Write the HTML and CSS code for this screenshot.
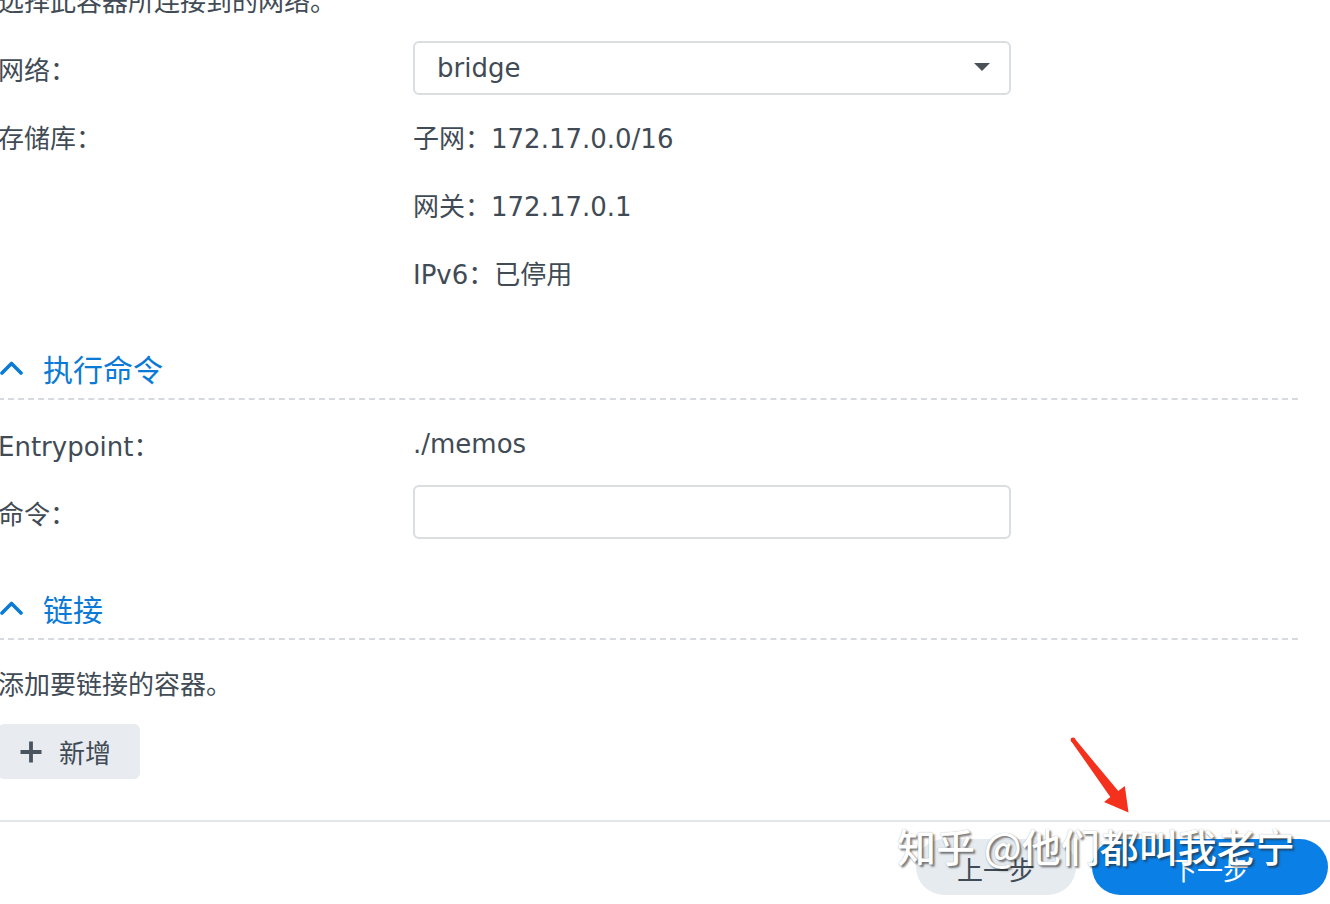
FILE: index.html
```html
<!DOCTYPE html>
<html lang="zh-CN">
<head>
<meta charset="utf-8">
<title>网络设置</title>
<link rel="stylesheet" href="styles.css">
</head>
<body>
<div class="page">
  <div class="content">
    <p class="desc top-desc">选择此容器所连接到的网络。</p>

    <div class="row">
      <div class="label">网络：</div>
      <div class="value">
        <div class="select"><span>bridge</span><span class="caret"></span></div>
      </div>
    </div>
    <div class="row">
      <div class="label">存储库：</div>
      <div class="value">子网：172.17.0.0/16</div>
    </div>
    <div class="row">
      <div class="label"></div>
      <div class="value">网关：172.17.0.1</div>
    </div>
    <div class="row">
      <div class="label"></div>
      <div class="value">IPv6：已停用</div>
    </div>

    <div class="section-head">
      <svg class="chevron" viewBox="0 0 24 16" width="24" height="16"><polyline points="2,14 11.5,4.5 21,14" fill="none" stroke="#0b7ad6" stroke-width="3.6" stroke-linecap="round" stroke-linejoin="round"/></svg>
      <span>执行命令</span>
    </div>

    <div class="row">
      <div class="label">Entrypoint：</div>
      <div class="value">./memos</div>
    </div>
    <div class="row">
      <div class="label">命令：</div>
      <div class="value"><div class="input"></div></div>
    </div>

    <div class="section-head">
      <svg class="chevron" viewBox="0 0 24 16" width="24" height="16"><polyline points="2,14 11.5,4.5 21,14" fill="none" stroke="#0b7ad6" stroke-width="3.6" stroke-linecap="round" stroke-linejoin="round"/></svg>
      <span>链接</span>
    </div>

    <p class="desc link-desc">添加要链接的容器。</p>
    <button class="add-btn">
      <svg class="plus" viewBox="0 0 24 24" width="24" height="24"><path d="M12 1.5V22.5M1.5 12H22.5" stroke="#4a5360" stroke-width="3.8" stroke-linecap="butt"/></svg>
      <span>新增</span>
    </button>
  </div>

  <div class="footer">
    <button class="btn btn-prev">上一步</button>
    <button class="btn btn-next">下一步</button>
  </div>
</div>

<svg class="arrow" viewBox="1060 730 80 90" width="80" height="90">
  <circle cx="1073" cy="740" r="2.4" fill="#f4311d"/>
  <polygon points="1071.4,741.4 1074.6,738.6 1118.3,791 1124.8,786 1128.5,812.5 1104,802 1110.3,797" fill="#f4311d"/>
</svg>

<div class="watermark">知乎 @他们都叫我老宁</div>
</body>
</html>
```

FILE: styles.css
```css
* {
  box-sizing: border-box;
}

html, body {
  margin: 0;
  padding: 0;
  background: #ffffff;
}

body {
  width: 1330px;
  height: 904px;
  overflow: hidden;
  position: relative;
  font-family: "DejaVu Sans", "Noto Sans CJK SC", sans-serif;
  font-size: 26px;
  color: #414b55;
}

.page {
  display: flex;
  flex-direction: column;
}

.content {
  width: 1300px;
  margin-left: -2px;
  display: flex;
  flex-direction: column;
}

.desc {
  margin: 0;
  height: 54px;
  line-height: 54px;
  white-space: nowrap;
}

.top-desc {
  margin-top: -25px;
  margin-bottom: 12px;
}

.link-desc {
  margin-top: 1px;
  margin-bottom: 12px;
}

.row {
  display: grid;
  grid-template-columns: 415px 598px;
  height: 54px;
  align-items: center;
  margin-bottom: 14px;
}

.label, .value {
  white-space: nowrap;
}

.select {
  height: 54px;
  border: 2px solid #d9dee3;
  border-radius: 6px;
  display: flex;
  align-items: center;
  justify-content: space-between;
  padding: 0 19px 0 22px;
  background: #fff;
}

.caret {
  width: 0;
  height: 0;
  border-left: 8px solid transparent;
  border-right: 8px solid transparent;
  border-top: 8px solid #4a5159;
  margin-top: -2px;
}

.input {
  height: 54px;
  border: 2px solid #d9dee3;
  border-radius: 6px;
  background: #fff;
}

.section-head {
  margin-top: 29px;
  height: 58px;
  border-bottom: 2px dashed #d6dadf;
  display: flex;
  align-items: center;
  gap: 19px;
  color: #0b7ad6;
  font-size: 30px;
  margin-bottom: 17px;
  padding-left: 2px;
  padding-bottom: 4px;
}

.chevron {
  flex: none;
  margin-top: -2px;
}

.add-btn {
  width: 142px;
  height: 55px;
  border: none;
  border-radius: 6px;
  background: #e8ecf0;
  display: flex;
  align-items: center;
  gap: 16px;
  padding: 0 0 0 21px;
  font-family: inherit;
  font-size: 26px;
  color: #414b55;
}

.plus {
  flex: none;
}

.footer {
  margin-top: 41px;
  border-top: 2px solid #e3e6e9;
  padding: 17px 2px 0 0;
  display: flex;
  justify-content: flex-end;
  gap: 16px;
}

.btn {
  height: 56px;
  border: none;
  border-radius: 28px;
  font-family: inherit;
  font-size: 26px;
  padding-top: 4px;
}

.btn-prev {
  width: 160px;
  background: #e6ebf0;
  color: #414b55;
}

.btn-next {
  width: 236px;
  background: #0a7fe6;
  color: #ffffff;
}

.arrow {
  position: absolute;
  left: 1060px;
  top: 730px;
}

.watermark {
  position: absolute;
  left: 897px;
  top: 820px;
  font-family: "Noto Sans CJK SC", sans-serif;
  font-size: 39px;
  font-weight: 500;
  line-height: 50px;
  color: #ffffff;
  white-space: nowrap;
  text-shadow: 2px 2px 2px rgba(40, 40, 40, 0.6), 0 0 1px rgba(0, 0, 0, 0.35);
}
```
